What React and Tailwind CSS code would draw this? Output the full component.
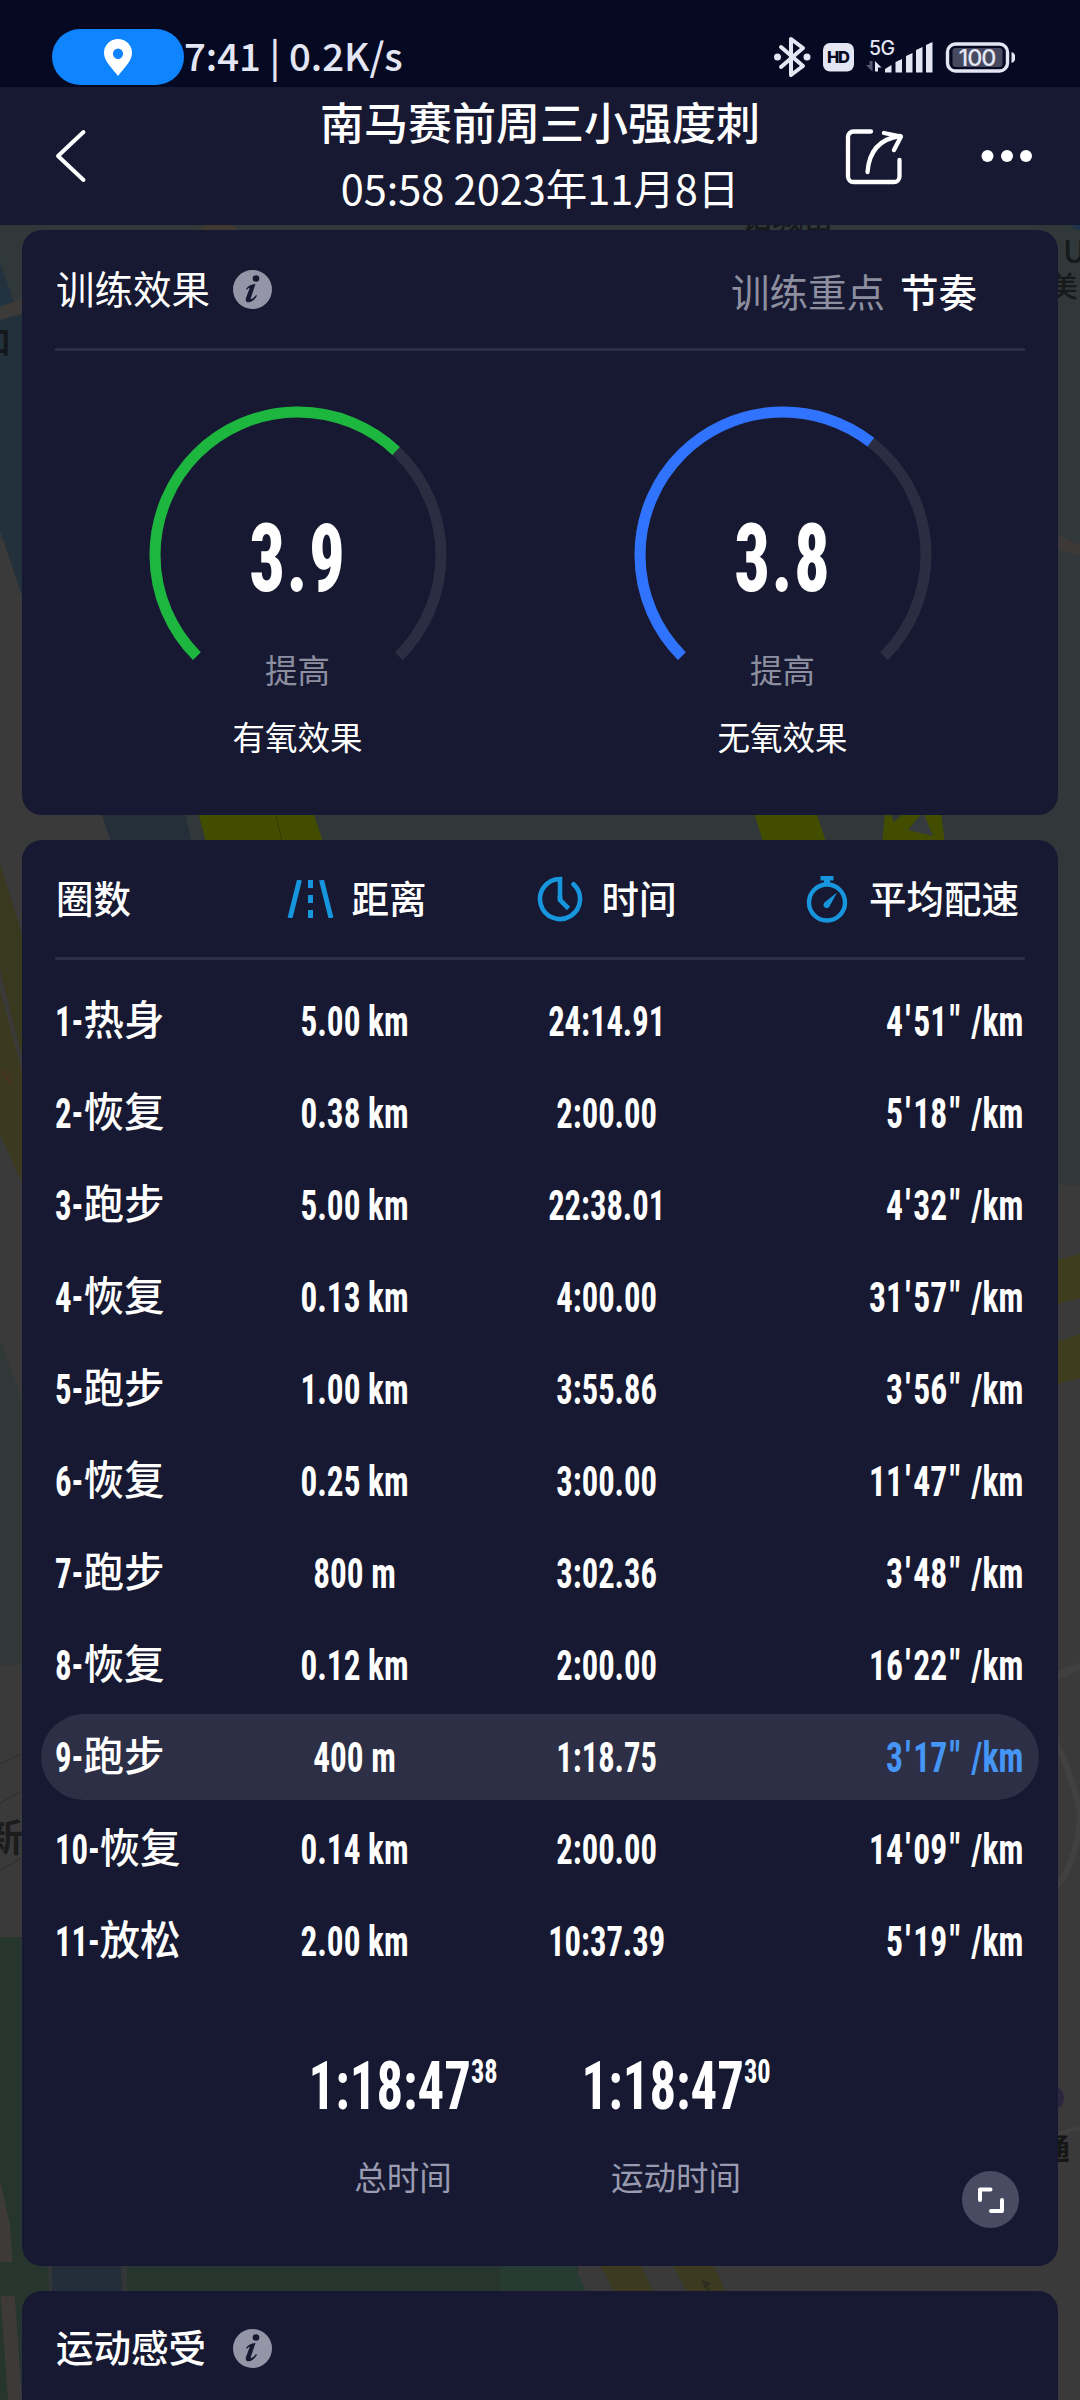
import React from "react";

const laps = [
  { no: 1, name: "热身", distance: "5.00 km", time: "24:14.91", min: "4", sec: "51" },
  { no: 2, name: "恢复", distance: "0.38 km", time: "2:00.00", min: "5", sec: "18" },
  { no: 3, name: "跑步", distance: "5.00 km", time: "22:38.01", min: "4", sec: "32" },
  { no: 4, name: "恢复", distance: "0.13 km", time: "4:00.00", min: "31", sec: "57" },
  { no: 5, name: "跑步", distance: "1.00 km", time: "3:55.86", min: "3", sec: "56" },
  { no: 6, name: "恢复", distance: "0.25 km", time: "3:00.00", min: "11", sec: "47" },
  { no: 7, name: "跑步", distance: "800 m", time: "3:02.36", min: "3", sec: "48" },
  { no: 8, name: "恢复", distance: "0.12 km", time: "2:00.00", min: "16", sec: "22" },
  { no: 9, name: "跑步", distance: "400 m", time: "1:18.75", min: "3", sec: "17", best: true },
  { no: 10, name: "恢复", distance: "0.14 km", time: "2:00.00", min: "14", sec: "09" },
  { no: 11, name: "放松", distance: "2.00 km", time: "10:37.39", min: "5", sec: "19" },
];

const totals = [
  { value: "1:18:47", fraction: "38", label: "总时间" },
  { value: "1:18:47", fraction: "30", label: "运动时间" },
];

// Dimmed map that shows around the cards
function MapBackground() {
  return (
    <svg
      className="absolute inset-0"
      width="1080"
      height="2400"
      viewBox="0 0 1080 2400"
      fontFamily="'Noto Sans CJK SC', sans-serif"
    >
      <rect width="1080" height="2400" fill="#3a3a3a" />

      {/* top area */}
      <rect y="220" width="1080" height="320" fill="#30383a" />
      <path d="M0 262L14 302L0 306Z" fill="#22333f" />
      <path d="M0 308L30 294V312L0 320Z" fill="#3d3b39" />
      <path d="M0 320L30 312V620L0 530Z" fill="#23313c" />
      <path d="M196 230L206 225H232L238 230Z" fill="#40392f" />
      <path d="M1070 225H1080V234Z" fill="#1d3347" />
      <rect x="1050" y="230" width="30" height="955" fill="#30383a" />
      <path d="M1056 534L1080 545V556L1056 548Z" fill="#3d3938" />

      {/* strip between the first two cards */}
      <path d="M103 812H1080V845H113Z" fill="#303839" />
      <path d="M101 812H185L192 845H112Z" fill="#242f3a" />
      <path d="M198 812H313L324 845H207Z" fill="#434d00" />
      <path d="M275 812L283 845" stroke="#343b00" strokeWidth="1" />
      <path d="M754 812H816L827 845H764Z" fill="#434d00" />
      <path d="M885 812H941L945 845H882Z" fill="#434d00" />
      <path d="M908 830L923 812L933 836Z" fill="#343a40" />
      <path d="M890 812H905L894 822Z" fill="#303839" />

      {/* left edge */}
      <path d="M0 863L30 960V1090L0 970Z" fill="#393920" />
      <path d="M0 990L30 1100V1200L0 1135Z" fill="#3b3a21" />
      <path d="M1 1070L6 1078L12 1085M6 1078L12 1073" stroke="#4b2f24" strokeWidth="1.5" fill="none" />
      <path d="M0 1340L30 1420V1665H0Z" fill="#303938" />
      <path d="M0 1764L24 1753M0 1803L24 1790M0 1870L24 1857" stroke="#2e2e2e" strokeWidth="1" />
      <rect y="1937" width="30" height="463" fill="#26362f" />
      <path d="M0 2180L10 2225L22 2400H8L0 2290Z" fill="#3d3a39" />

      {/* right edge */}
      <path d="M1050 1262L1080 1254V1298L1050 1306Z" fill="#3d3c1c" />
      <path d="M1050 1344L1080 1334V1378L1050 1386Z" fill="#3d3c1c" />
      <path d="M1056 1676L1080 1666" stroke="#404040" strokeWidth="8" />
      <path d="M1056 1742C1070 1770 1078 1800 1080 1815C1078 1850 1068 1875 1056 1886" stroke="#414141" strokeWidth="6" fill="none" />
      <circle cx="1052" cy="2098" r="12" fill="#2b2640" />
      <path d="M1058 2134L1080 2128" stroke="#404040" strokeWidth="4" />

      {/* strip between the last two cards */}
      <rect y="2262" width="578" height="34" fill="#26362f" />
      <path d="M500 2262H573L588 2296H500Z" fill="#263c33" />
      <path d="M47 2262H127V2296H50Z" fill="#333636" />
      <path d="M52 2262H121L122 2296H52Z" fill="#242e3a" />
      <path d="M598 2262H640L655 2296H617Z" fill="#3c3b22" />
      <path d="M671 2262H712L728 2296H689Z" fill="#3c3b22" />
      <path d="M702 2281L709 2284L704 2287M702 2281L710 2292" stroke="#2e2d20" strokeWidth="2" fill="none" />

      {/* place names */}
      <text x="741" y="229" fontSize="31" fontWeight="500" fill="#17191a">铂城苗</text>
      <text x="1063" y="263" fontSize="31" fontWeight="500" fill="#17191a">U</text>
      <text x="1050" y="297" fontSize="28" fontWeight="500" fill="#17191a">美</text>
      <text x="-20" y="353" fontSize="31" fontWeight="700" fill="#14181c">口</text>
      <text x="-15" y="1851" fontSize="38" fontWeight="700" fill="#1c1c1c">新</text>
      <text x="1041" y="2160" fontSize="29" fontWeight="700" fill="#161616">通</text>
    </svg>
  );
}

function StatusBar() {
  return (
    <div className="flex h-[87px] items-start bg-[#050922] pl-[52px] text-[#e4e6f4]">
      <div className="mt-[29px] flex h-14 w-[132px] items-center justify-center rounded-full bg-[#0f84ff]">
        <svg width="28" height="37" viewBox="0 0 28 37">
          <path
            fillRule="evenodd"
            d="M14 0A14 14 0 0 1 28 14C28 22 20 29 14 37C8 29 0 22 0 14A14 14 0 0 1 14 0ZM14 9.500A5 5.200 0 0 0 14 20A5 5.200 0 0 0 14 9.500Z"
            fill="#fff"
          />
        </svg>
      </div>
      <span className="mt-[27px] w-[590px] whitespace-nowrap text-[38.300px] font-medium leading-[56px]">
        7:41 | 0.2K/s
      </span>
      <svg className="mt-[36px]" width="242" height="42" viewBox="0 0 242 42" fontFamily="Inter, sans-serif">
        {/* bluetooth */}
        <path
          d="M7 11L29 30L17 39V3L29 12L7 31"
          fill="none"
          stroke="#e4e6f4"
          strokeWidth="4"
          strokeLinecap="round"
          strokeLinejoin="round"
        />
        <circle cx="3.500" cy="21" r="3.500" fill="#e4e6f4" />
        <circle cx="33" cy="21" r="3.500" fill="#e4e6f4" />
        {/* HD */}
        <rect x="49" y="7" width="31" height="28.500" rx="7" fill="#e4e6f4" />
        <text x="64.500" y="27" fontSize="16.500" fontWeight="800" textAnchor="middle" textLength="23" fill="#050922">HD</text>
        {/* signal */}
        <text x="95" y="19" fontSize="19.500" fontWeight="500" textLength="26" fill="#e4e6f4">5G</text>
        <path d="M98.500 25V35.500L92 29H95.500V25Z" fill="#555973" />
        <path d="M101 35.500V25L107.500 31.500H104V35.500Z" fill="#e4e6f4" />
        <g fill="#e4e6f4">
          <path d="M111 36.500V33L117.500 29V36.500Z" />
          <path d="M121.500 36.500V26L128 23V36.500Z" />
          <path d="M132 36.500V20L138.500 17V36.500Z" />
          <path d="M142 36.500V14L148.500 11V36.500Z" />
          <path d="M152 36.500V9L158.500 6V36.500Z" />
        </g>
        {/* battery */}
        <rect x="173.500" y="8" width="60" height="27" rx="8" fill="none" stroke="#e4e6f4" strokeWidth="3.400" />
        <rect x="178.500" y="12" width="50" height="19" rx="3" fill="#474a5e" />
        <path d="M237.500 16A5 5 0 0 1 241 19V24A5 5 0 0 1 237.500 27Z" fill="#e4e6f4" />
        <text x="203.500" y="30" fontSize="23.500" fontWeight="500" textAnchor="middle" textLength="38" fill="#e4e6f4">100</text>
      </svg>
    </div>
  );
}

function Header() {
  return (
    <div className="flex h-[138px] items-center justify-between bg-[#161931] pl-[55px] pr-[48px]">
      <svg className="w-[258px]" height="56" viewBox="0 0 258 56">
        <path d="M28.500 4L3 28L28.500 52" fill="none" stroke="#fff" strokeWidth="4" strokeLinecap="round" strokeLinejoin="round" />
      </svg>
      <div className="-mt-[4px] flex flex-col items-center whitespace-nowrap">
        <h1 className="text-[44px] font-medium leading-[66px]">南马赛前周三小强度刺</h1>
        <p className="text-[41.500px] leading-[66px]">05:58 2023年11月8日</p>
      </div>
      <div className="flex w-[265px] items-center justify-end gap-[78px]">
        <svg width="58" height="58" viewBox="0 0 58 58" fill="none" stroke="#fff" strokeWidth="4.300" strokeLinecap="round" strokeLinejoin="round">
          <path d="M26 4.500H8.500A5.500 5.500 0 0 0 3 10V49.500A5.500 5.500 0 0 0 8.500 55H49A5.500 5.500 0 0 0 54.500 49.500V33" />
          <path d="M22.500 45C24 25 34 12 55 9" />
          <path d="M39 6L56 9.500L49 23" />
        </svg>
        <svg width="51" height="14" viewBox="0 0 51 14" fill="#fff">
          <circle cx="6.500" cy="7" r="6" />
          <circle cx="26" cy="7" r="6" />
          <circle cx="45" cy="7" r="6" />
        </svg>
      </div>
    </div>
  );
}

function InfoIcon() {
  return (
    <svg width="39" height="39" viewBox="0 0 39 39">
      <circle cx="19.500" cy="19.500" r="19.500" fill="#9496a8" />
      <circle cx="23" cy="8.500" r="3.300" fill="#161931" />
      <path
        d="M13 19C15 16 18 14.500 22.500 14L17.800 28C17.500 29.300 18.600 29.300 19.500 28.600C20.800 27.700 22 26.300 23 25L24 25.800C21.500 30 18.500 32.300 15.500 32.300C12.800 32.300 12.300 30.300 13 28L16.600 18.200C16 17.800 15 18.500 14 19.800Z"
        fill="#161931"
      />
    </svg>
  );
}

function Gauge({ value, ratio, color, label }) {
  const radius = 143;
  const length = 2 * Math.PI * radius;
  const arc = length * 0.75;
  return (
    <div className="flex w-[485px] flex-col items-center">
      <div className="relative flex h-[298px] w-[298px] flex-col items-center">
        <svg className="absolute inset-0" width="298" height="298" viewBox="0 0 298 298">
          <g transform="rotate(135 149 149)" fill="none" strokeWidth="11">
            <circle cx="149" cy="149" r={radius} stroke="#2b2e43" strokeDasharray={`${arc} ${length}`} />
            <circle cx="149" cy="149" r={radius} stroke={color} strokeDasharray={`${arc * ratio} ${length}`} />
          </g>
        </svg>
        <span className="mt-[103px] inline-block scale-x-[0.75] font-['Roboto_Condensed'] text-[94px] font-extrabold leading-[100px] tracking-[2px]">
          {value}
        </span>
        <span className="mt-[36px] text-[32.500px] leading-[48px] text-[#8d8fa0]">提高</span>
      </div>
      <span className="mt-[8px] text-[32.500px] leading-[48px]">{label}</span>
    </div>
  );
}

function TrainingEffect() {
  return (
    <div className="flex h-[585px] flex-col rounded-[20px] bg-[#161931] px-[33px]">
      <div className="flex h-[121px] items-center justify-between border-b-[3px] border-[#2b2e45] pl-px pr-[48px]">
        <div className="flex items-center gap-[23px]">
          <h2 className="-mt-[5px] text-[38.500px] leading-[56px]">训练效果</h2>
          <InfoIcon />
        </div>
        <div className="mt-px flex gap-[15px] text-[38.500px] leading-[56px]">
          <span className="text-[#8d8fa0]">训练重点</span>
          <span className="font-medium">节奏</span>
        </div>
      </div>
      <div className="mt-[55px] flex">
        <Gauge value="3.9" ratio={0.66} color="#1db63e" label="有氧效果" />
        <Gauge value="3.8" ratio={0.64} color="#2f73ff" label="无氧效果" />
      </div>
    </div>
  );
}

function LapRow({ lap }) {
  return (
    <div
      className={`-mx-[14px] my-[3px] grid h-[86px] grid-cols-[174px_251px_251px_294px] items-center whitespace-nowrap rounded-full px-[14px] font-['Roboto_Condensed','Noto_Sans_CJK_SC',sans-serif] text-[42px] font-bold ${
        lap.best ? "bg-[#2c2f45]" : ""
      }`}
    >
      <div className="flex items-center">
        <span className="origin-left scale-x-[0.78]">{lap.no}-</span>
        <span className={`mt-px text-[40.500px] font-medium ${lap.no > 9 ? "-ml-[13px]" : "-ml-[8px]"}`}>
          {lap.name}
        </span>
      </div>
      <span className="mt-px scale-x-[0.79] text-center">{lap.distance}</span>
      <span className="mt-px scale-x-[0.775] pl-[3px] text-center">{lap.time}</span>
      <span className={`mt-px origin-right scale-x-[0.8] pr-[2px] text-right ${lap.best ? "text-[#4595f5]" : ""}`}>
        {lap.min}
        <span className="mx-[3px]">'</span>
        {lap.sec}
        <span className="mx-[3px] tracking-[1px]">"</span> /km
      </span>
    </div>
  );
}

function Laps() {
  return (
    <div className="flex h-[1426px] flex-col rounded-[20px] bg-[#161931] px-[33px]">
      <div className="grid h-[120px] grid-cols-[174px_251px_251px_294px] items-center border-b-[3px] border-[#2b2e45] text-[37.500px] font-medium">
        <span className="-mt-[3px] pl-px">圈数</span>
        <div className="flex items-center justify-center gap-[18px] pl-[4px]">
          <svg width="47" height="38" viewBox="0 0 47 38" stroke="#1795dd" strokeWidth="5" fill="none">
            <path d="M12.500 0L3 38" />
            <path d="M34.500 0L44 38" />
            <path d="M23.500 0V8M23.500 15V23M23.500 30V38" />
          </svg>
          <span className="-mt-[3px]">距离</span>
        </div>
        <div className="flex items-center justify-center gap-[19px] pl-[2px]">
          <svg width="46" height="46" viewBox="0 0 46 46" stroke="#1795dd" strokeWidth="4.600" fill="none">
            <path d="M23 23V3A20 20 0 1 0 36.500 8.200" strokeLinecap="round" />
            <path d="M23 20V24L31.500 32.500" />
          </svg>
          <span className="-mt-[3px]">时间</span>
        </div>
        <div className="flex items-center justify-end gap-[21px] pr-[6px]">
          <svg width="42" height="48" viewBox="0 0 42 48">
            <circle cx="21" cy="27.500" r="18" stroke="#1795dd" strokeWidth="4.400" fill="none" />
            <path d="M14.500 1H27.500V5.500H24V9H18V5.500H14.500Z" fill="#1795dd" />
            <path d="M31 17.500L24 30.500A3.300 3.300 0 1 1 19 27Z" fill="#1795dd" />
          </svg>
          <span className="-mt-[3px]">平均配速</span>
        </div>
      </div>

      <div className="mt-[15px] flex flex-col">
        {laps.map((lap) => (
          <LapRow key={lap.no} lap={lap} />
        ))}
      </div>

      <div className="mt-[60px] flex justify-center pr-px">
        {totals.map((total) => (
          <div key={total.label} className="flex w-[273px] flex-col items-center">
            <div className="flex scale-x-[0.8] items-start whitespace-nowrap font-['Roboto_Condensed'] font-bold">
              <span className="text-[66px] leading-[80px]">{total.value}</span>
              <span className="mt-[5px] text-[33px] leading-[40px]">{total.fraction}</span>
            </div>
            <span className="mt-[25px] text-[32.500px] leading-[48px] text-[#9a9bb0]">{total.label}</span>
          </div>
        ))}
      </div>

      <button className="-mt-[29px] mr-[6px] flex size-[57px] items-center justify-center self-end rounded-full bg-[#484b61]">
        <svg width="28" height="28" viewBox="0 0 28 28" fill="none" stroke="#fff" strokeWidth="4" strokeLinecap="round" strokeLinejoin="round">
          <path d="M3 14V3.500H13.500" />
          <path d="M25 14V25H14" />
        </svg>
      </button>
    </div>
  );
}

function Feeling() {
  return (
    <div className="h-[180px] rounded-t-[20px] bg-[#161931] px-[33px] pt-[30px]">
      <div className="flex items-center gap-[27px] pl-px">
        <h2 className="-mt-[4px] text-[37.500px] font-medium leading-[58px]">运动感受</h2>
        <InfoIcon />
      </div>
    </div>
  );
}

export default function App() {
  return (
    <div className="relative h-[2400px] w-[1080px] overflow-hidden bg-[#3a3a3a] font-['Noto_Sans_CJK_SC',sans-serif] text-white">
      <MapBackground />
      <div className="relative flex flex-col">
        <StatusBar />
        <Header />
        <main className="mt-[5px] flex flex-col gap-[25px] px-[22px]">
          <TrainingEffect />
          <Laps />
          <Feeling />
        </main>
      </div>
    </div>
  );
}
